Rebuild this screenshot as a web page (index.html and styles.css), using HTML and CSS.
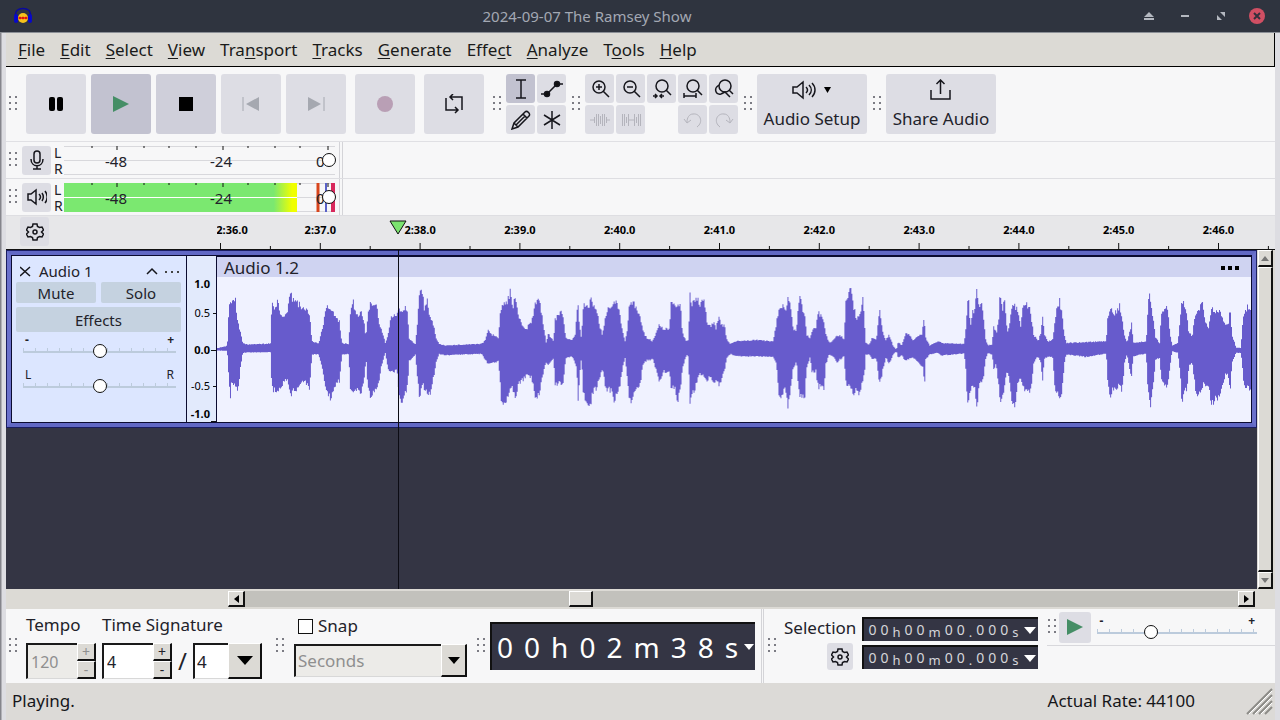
FILE: index.html
```html
<!DOCTYPE html>
<html lang="en">

<head>
  <meta charset="UTF-8">
  <meta name="viewport" content="width=device-width, initial-scale=1.0">
  <title>2024-09-07 The Ramsey Show</title>
  <link rel="stylesheet" href="styles.css">
</head>

<body>
  <header class="titlebar">
    <svg class="logo" width="20" height="18" viewBox="0 0 20 18">
      <path d="M3 11C1 3 6 1.500 10 1.500S19 3 17 11" fill="none" stroke="#0a0a9c" stroke-width="1.500" />
      <circle cx="10" cy="11" r="5" fill="#f6c21c" />
      <path d="M5 11l2-1.500 1.500 1 1.500-1 1.500 1 1.500-1 2 1.500-2 1.500-1.500-1-1.500 1-1.500-1-1.500 1z" fill="#e01010" />
      <rect x="1" y="7" width="4" height="9" rx="2" fill="#0808c8" />
      <rect x="15" y="7" width="4" height="9" rx="2" fill="#0808c8" />
    </svg>
    <h1>2024-09-07 The Ramsey Show</h1>
    <div class="win-buttons">
      <button aria-label="Shade"><svg width="10" height="10"><path d="M5 1l5 5H0zM0 7h10v2H0z" /></svg></button>
      <button aria-label="Minimize"><svg width="10" height="10"><path d="M1 4h8v2H1z" /></svg></button>
      <button aria-label="Restore"><svg width="10" height="10"><path d="M4 1h5v5zM1 4v5h5z" /></svg></button>
      <button class="close" aria-label="Close"><svg width="10" height="10"><path d="M2 2l6 6M8 2l-6 6" stroke="#33303c" stroke-width="2" /></svg></button>
    </div>
  </header>

  <div class="window">
    <nav class="menubar">
      <a href="#"><u>F</u>ile</a>
      <a href="#"><u>E</u>dit</a>
      <a href="#"><u>S</u>elect</a>
      <a href="#"><u>V</u>iew</a>
      <a href="#">Tra<u>n</u>sport</a>
      <a href="#"><u>T</u>racks</a>
      <a href="#"><u>G</u>enerate</a>
      <a href="#">Effe<u>c</u>t</a>
      <a href="#"><u>A</u>nalyze</a>
      <a href="#">T<u>o</u>ols</a>
      <a href="#"><u>H</u>elp</a>
    </nav>

    <div class="toolbar">
      <span class="grip"></span>
      <div class="transport">
        <button aria-label="Pause"><svg width="20" height="20"><rect x="3" y="3" width="6" height="14" rx="2" /><rect x="11" y="3" width="6" height="14" rx="2" /></svg></button>
        <button class="pressed" aria-label="Play"><svg width="20" height="20"><path d="M2 2l16 8-16 8z" fill="#458e66" /></svg></button>
        <button class="hot" aria-label="Stop"><svg width="20" height="20"><path d="M3 3h14v14H3z" /></svg></button>
        <button disabled aria-label="Skip to start"><svg width="20" height="20"><path d="M18 3v14L5 10z" fill="#a5a8b0" /><path d="M2 3v14" stroke="#a5a8b0" /></svg></button>
        <button disabled aria-label="Skip to end"><svg width="20" height="20"><path d="M2 3v14l13-7z" fill="#a5a8b0" /><path d="M18 3v14" stroke="#a5a8b0" /></svg></button>
        <button class="apart" disabled aria-label="Record"><svg width="20" height="20"><circle cx="10" cy="10" r="8" fill="#b99fb5" /></svg></button>
        <button class="apart" aria-label="Loop"><svg class="line" width="20" height="20"><path d="M5 16H2V4M6 3h12v13M9 0L6 3l3 3M4 16h10M11 13l3 3-3 3" /></svg></button>
      </div>
      <span class="grip"></span>
      <div class="grid tools">
        <button class="pressed" aria-label="Selection tool"><svg class="line" width="20" height="20"><path d="M5 1h10M5 19h10M10 1v18" /></svg></button>
        <button aria-label="Envelope tool"><svg class="line" width="22" height="20"><path d="M0 15h6L16 5h6" /><circle cx="6" cy="15" r="2.500" fill="#111" /><circle cx="16" cy="5" r="2.500" fill="#111" /></svg></button>
        <button aria-label="Draw tool"><svg class="line" width="20" height="20"><path d="M1 19l2-6L14 2c2-2 6 2 4 4L7 17zM3 13l4 4M12 4l4 4M5 15l9-9" /></svg></button>
        <button aria-label="Multi-tool"><svg class="line" width="20" height="20"><path d="M10 1v18M2 5l16 10M18 5L2 15" /></svg></button>
      </div>
      <span class="grip"></span>
      <div class="grid zoom">
        <button aria-label="Zoom in"><svg class="line" width="20" height="20"><circle cx="9" cy="8" r="6" /><path d="M13 12l6 6M6 8h6M9 5v6" /></svg></button>
        <button aria-label="Zoom out"><svg class="line" width="20" height="20"><circle cx="9" cy="8" r="6" /><path d="M13 12l6 6M6 8h6" /></svg></button>
        <button aria-label="Fit selection"><svg class="line" width="20" height="20"><circle cx="10" cy="7" r="6" /><path d="M14 11l5 5M1 17h4M8 17h4M3 15l2 2-2 2M10 15l-2 2 2 2" /></svg></button>
        <button aria-label="Fit project"><svg class="line" width="20" height="20"><circle cx="10" cy="7" r="6" /><path d="M14 11l5 5M1 17h12M1 14v5M13 14v5" /></svg></button>
        <button aria-label="Zoom toggle"><svg class="line" width="20" height="20"><circle cx="11" cy="7" r="6" /><path d="M15 11l4 4M5 6c-6 4-3 10 2 9M7 15l4-2 5 5" /></svg></button>
        <button disabled aria-label="Trim audio"><svg class="line" width="20" height="20"><path d="M0 10h4M16 10h4M4.500 7v6M6.500 4v12M8.500 4v12M10.500 6v8M12.500 4v12M14.500 4v12M16.500 7v6" /></svg></button>
        <button disabled aria-label="Silence audio"><svg class="line" width="20" height="20"><path d="M1.500 4v12M3.500 4v12M5.500 7v6M7.500 4v12M7 10h6M13.500 4v12M15.500 7v6M17.500 4v12M19.500 4v12" /></svg></button>
        <span></span>
        <button disabled aria-label="Undo"><svg class="line" width="20" height="20"><path d="M14 17c7-5 3-14-4-13-4 0-6 4-6 8M1 9l3 4 4-3" /></svg></button>
        <button disabled aria-label="Redo"><svg class="line" width="20" height="20"><path d="M6 17C-1 12 3 3 10 4c4 0 6 4 6 8M19 9l-3 4-4-3" /></svg></button>
      </div>
      <span class="grip"></span>
      <button class="big">
        <span class="big-icon"><svg class="line" width="24" height="20"><path d="M1 7v6h4l6 5V2L5 7zM14 7c2 2 2 4 0 6M17 5c3 3 3 7 0 10M20 3c4 4 4 10 0 14" /></svg><svg width="8" height="8"><path d="M0 1h7L3.500 7z" /></svg></span>
        Audio Setup
      </button>
      <span class="grip"></span>
      <button class="big">
        <span class="big-icon"><svg class="line" width="22" height="22"><path d="M1 11v9h19v-9M10.500 15V1M6.500 5l4-4 4 4" /></svg></span>
        Share Audio
      </button>
    </div>

    <div class="meter-row">
      <div class="meter-bar">
        <span class="grip"></span>
        <button class="small" aria-label="Record meter"><svg class="line" width="20" height="20"><rect x="7" y="1" width="6" height="12" rx="3" /><path d="M4 9c0 9 12 9 12 0M10 16v3M6 19h8" /></svg></button>
        <span class="channels">L<br>R</span>
        <div class="meter">
          <svg class="ticks" width="271" height="29"><path d="M28 0v2M80 0v2M105 0v2M132 0v2M184 0v2M211 0v2M236 0v2M53 0v4M159 0v4M264 0v4" /></svg>
          <span class="db db-48">-48</span><span class="db db-24">-24</span><span class="db db-0">0</span>
          <input type="range" value="100" aria-label="Recording volume">
        </div>
      </div>
    </div>
    <div class="meter-row">
      <div class="meter-bar">
        <span class="grip"></span>
        <button class="small" aria-label="Playback meter"><svg class="line" width="20" height="20"><path d="M1 7v6h3l5 4V3L4 7zM12 7c2 2 2 4 0 6M15 6c2 3 2 5 0 8M18 4c3 4 3 8 0 12" /></svg></button>
        <span class="channels">L<br>R</span>
        <div class="meter">
          <span class="level"></span>
          <svg class="ticks" width="271" height="29"><path d="M254 0v29" stroke="#d8451c" stroke-width="3" /><path d="M262 0v29" stroke="#5a62c8" stroke-width="2" /><path d="M269 0v29" stroke="#d8285c" stroke-width="4" /><path d="M28 0v2M80 0v2M105 0v2M132 0v2M184 0v2M211 0v2M236 0v2M53 0v4M159 0v4M264 0v4" /></svg>
          <span class="db db-48">-48</span><span class="db db-24">-24</span><span class="db db-0">0</span>
          <input type="range" value="100" aria-label="Playback volume">
        </div>
      </div>
    </div>

    <div class="timeline">
      <div class="timeline-head">
        <button class="small" aria-label="Timeline options"><svg class="line gear" width="18" height="18" viewBox="0 0 18 18"><path d="M7 1h4l.5 2.500 2 1L16 4l1.500 3-2 2 2 2L16 14l-2.500-.5-2 1L11 17H7l-.5-2.500-2-1L2 14 .5 11l2-2-2-2L2 4l2.500.5 2-1z" /><circle cx="9" cy="9" r="2" /></svg></button>
      </div>
      <svg class="ruler" height="33"></svg>
      <svg class="marker" width="18" height="16"><path d="M1 1h16L9 14z" fill="#7be36f" stroke="#111" /></svg>
    </div>

    <main class="workspace">
      <div class="tracks">
        <section class="track">
          <div class="panel">
            <div class="panel-top">
              <button aria-label="Delete track"><svg class="line" width="11" height="11"><path d="M0 1l10 9M10 1L0 10" /></svg></button>
              <span class="name">Audio 1</span>
              <button aria-label="Collapse"><svg class="line" width="12" height="8"><path d="M1 7l5-5 5 5" /></svg></button>
              <button aria-label="Track menu"><svg width="16" height="8"><path d="M1 4h2v2H1zM7 4h2v2H7zM13 4h2v2h-2z" fill="#444" /></svg></button>
            </div>
            <div class="panel-buttons">
              <button>Mute</button>
              <button>Solo</button>
              <button class="wide">Effects</button>
            </div>
            <label class="slider"><span>-</span><span>+</span><input type="range" value="50" aria-label="Gain"></label>
            <label class="slider pan"><span>L</span><span>R</span><input type="range" value="50" aria-label="Pan"></label>
          </div>
          <svg class="vruler" width="30" height="166">
            <text class="b" x="23" y="32">1.0</text>
            <text x="23" y="61">0.5</text>
            <text class="b" x="23" y="98">0.0</text>
            <text x="23" y="134">-0.5</text>
            <text class="b" x="23" y="162">-1.0</text>
            <path d="M26 57.500h4M24 94.500h6M26 130.500h4M24 165.500h6" />
          </svg>
          <div class="clip">
            <div class="clip-head"><span>Audio 1.2</span><button aria-label="Clip menu"><svg width="20" height="6"><path d="M1 1h4v4H1zM8 1h4v4H8zM15 1h4v4h-4z" /></svg></button></div>
            <svg class="wave" viewBox="0 66 3105 438" preserveAspectRatio="none"><path id="wave" /></svg>
          </div>
        </section>
        <div class="playhead"></div>
      </div>
      <div class="vscroll">
        <button aria-label="Scroll up"><svg width="8" height="5"><path d="M0 5l4-5 4 5z" /></svg></button>
        <div class="thumb"></div>
        <button aria-label="Scroll down"><svg width="8" height="5"><path d="M0 0l4 5 4-5z" /></svg></button>
      </div>
    </main>

    <div class="hscroll">
      <button aria-label="Scroll left"><svg width="5" height="8"><path d="M5 0L0 4l5 4z" /></svg></button>
      <div class="rail"><div class="thumb"></div></div>
      <button aria-label="Scroll right"><svg width="5" height="8"><path d="M0 0l5 4-5 4z" /></svg></button>
    </div>

    <div class="bottom">
      <span class="grip"></span>
      <div class="field tempo">
        <label for="tempo">Tempo</label>
        <div class="spin off">
          <input id="tempo" type="text" value="120" disabled>
          <div class="steps"><button disabled>+</button><button disabled>-</button></div>
        </div>
      </div>
      <div class="field signature">
        <label for="upper">Time Signature</label>
        <div class="sig-row">
          <div class="spin">
            <input id="upper" type="text" value="4">
            <div class="steps"><button>+</button><button>-</button></div>
          </div>
          <span class="slash">/</span>
          <div class="combo lower">
            <select aria-label="Lower time signature"><option>4</option></select>
            <span class="arrow"><svg width="16" height="9"><path d="M0 0h16L8 9z" /></svg></span>
          </div>
        </div>
      </div>
      <span class="grip"></span>
      <div class="field snap">
        <label><input type="checkbox">Snap</label>
        <div class="combo off">
          <select disabled aria-label="Snap to"><option>Seconds</option></select>
          <span class="arrow"><svg width="12" height="7"><path d="M0 0h12L6 7z" /></svg></span>
        </div>
      </div>
      <span class="grip"></span>
      <div class="clock">
        <span>0</span><span>0</span><span>h</span><span>0</span><span>2</span><span>m</span><span>3</span><span>8</span><span>s</span>
        <svg width="10" height="6"><path d="M0 0h10L5 6z" fill="#fff" /></svg>
      </div>
      <div class="selection">
        <span class="grip"></span>
        <div class="selection-head">
          <span>Selection</span>
          <button class="small" aria-label="Selection options"><svg class="line gear" width="18" height="18" viewBox="0 0 18 18"><path d="M7 1h4l.5 2.500 2 1L16 4l1.500 3-2 2 2 2L16 14l-2.500-.5-2 1L11 17H7l-.5-2.500-2-1L2 14 .5 11l2-2-2-2L2 4l2.500.5 2-1z" /><circle cx="9" cy="9" r="2" /></svg></button>
        </div>
        <div class="times">
          <div class="time"><span>0</span><span>0</span><i>h</i><span>0</span><span>0</span><i>m</i><span>0</span><span>0</span><i>.</i><span>0</span><span>0</span><span>0</span><i>s</i><svg width="12" height="7"><path d="M0 0h12L6 7z" fill="#fff" /></svg></div>
          <div class="time"><span>0</span><span>0</span><i>h</i><span>0</span><span>0</span><i>m</i><span>0</span><span>0</span><i>.</i><span>0</span><span>0</span><span>0</span><i>s</i><svg width="12" height="7"><path d="M0 0h12L6 7z" fill="#fff" /></svg></div>
        </div>
      </div>
      <div class="speed">
        <span class="grip"></span>
        <button class="small" aria-label="Play at speed"><svg width="18" height="18"><path d="M1 1l16 8-16 8z" fill="#458e66" /></svg></button>
        <label class="slider"><span>-</span><span>+</span><input type="range" value="32" aria-label="Playback speed"></label>
      </div>
    </div>

    <footer class="status">
      <span>Playing.</span>
      <span class="rate">Actual Rate: 44100</span>
      <svg width="28" height="28"><path d="M2 27L27 2M8 27L27 8M14 27l13-13M20 27l7-7" stroke="#8d8c88" stroke-width="2" /><path d="M4 27L27 4M10 27l17-17M16 27l11-11" stroke="#fff" /></svg>
    </footer>
  </div>

  <script src="wave.js"></script>
</body>

</html>
```
FILE: styles.css
```css
* {
  box-sizing: border-box;
  margin: 0;
  padding: 0;
}

body {
  display: flex;
  flex-direction: column;
  height: 100vh;
  overflow: hidden;
  background: linear-gradient(90deg, #85858c 1px, #dddde2 2px);
  color: #22222a;
  font: 17px/24px "Noto Sans", sans-serif;
}

button,
input,
select {
  font: inherit;
  color: inherit;
  border: 0;
  border-radius: 0;
}

button {
  display: flex;
  align-items: center;
  justify-content: center;
  background: none;
}

svg {
  display: block;
  flex: none;
}

.line {
  fill: none;
  stroke: #16161c;
  stroke-width: 1.5;
}

.titlebar {
  display: flex;
  align-items: center;
  flex: none;
  height: 33px;
  padding: 0 15px 0 13px;
  background: #2f343f;
  border-bottom: 1px solid #8b8f96;
}

.titlebar h1 {
  flex: 1;
  text-align: center;
  font-size: 15px;
  font-weight: normal;
  color: #a3a8b3;
}

.win-buttons {
  display: flex;
  gap: 20px;
  fill: #b4b8c0;
}

.win-buttons button {
  width: 16px;
  height: 16px;
}

.win-buttons .close {
  border-radius: 50%;
  background: #d04f63;
}

.window {
  display: flex;
  flex-direction: column;
  flex: 1;
  min-height: 0;
  margin: 0 5px 0 6px;
  background: #f7f7f8;
}

.menubar {
  display: flex;
  align-items: center;
  gap: 15px;
  flex: none;
  height: 34px;
  padding-left: 12px;
  background: #dcdad5;
  border: solid #000;
  border-width: 0 1px 1px 0;
}

.menubar a {
  color: #1a1a1a;
  text-decoration: none;
}

.menubar u {
  text-decoration-thickness: 1px;
  text-underline-offset: 2px;
}

/* dotted drag handle */
.grip {
  flex: none;
  width: 10px;
  height: 18px;
  background: radial-gradient(circle at 2px 2px, #7c7c84 1px, transparent 1px) 0 0 / 6px 6px;
}

.toolbar {
  display: flex;
  align-items: center;
  gap: 5px;
  flex: none;
  height: 75px;
  padding: 0 2px;
  border-bottom: 1px solid #e0e0e4;
}

.toolbar button,
.small {
  background: #dddde4;
  border-radius: 3px;
}

.toolbar .hot {
  background: #cfcfda;
}

.toolbar .pressed {
  background: #c2c2d0;
}

.toolbar button:disabled .line {
  stroke: #b4b4bc;
  stroke-width: 1;
}

.transport {
  display: flex;
  gap: 5px;
  margin: 0 3px;
}

.transport button {
  width: 60px;
  height: 60px;
}

.transport .apart {
  margin-left: 4px;
}

.grid {
  display: grid;
  grid-auto-rows: 29px;
  gap: 2px;
  margin-left: -1px;
}

.tools {
  grid-template-columns: repeat(2, 29px);
}

.zoom {
  grid-template-columns: repeat(5, 29px);
}

.toolbar .big {
  flex-direction: column;
  gap: 5px;
  width: 110px;
  height: 60px;
  margin-left: -1px;
}

.big-icon {
  display: flex;
  align-items: center;
  gap: 8px;
  height: 24px;
}

.small {
  flex: none;
  width: 29px;
  height: 29px;
}

.meter-row {
  display: flex;
  flex: none;
  height: 37px;
  border-bottom: 1px solid #dedee2;
}

.meter-bar {
  display: flex;
  align-items: center;
  padding: 0 4px 0 2px;
  border-right: 4px double #d4d4d8;
}

.meter-bar .small {
  margin: 0 3px 0 4px;
}

.channels {
  width: 10px;
  padding-top: 2px;
  font-size: 14px;
  line-height: 16px;
}

.meter {
  position: relative;
  width: 271px;
  height: 29px;
  border: solid #d8d8dc;
  border-width: 1px 0;
  background: linear-gradient(#d8d8dc, #d8d8dc) 0 50% / 100% 1px no-repeat;
}

.level {
  position: absolute;
  inset: -1px 38px -1px 0;
  background: linear-gradient(#fff, #fff) 0 50% / 100% 1px no-repeat,
    linear-gradient(90deg, #7be870 90%, #f0ff00 98%);
}

.ticks {
  position: absolute;
  top: -1px;
  left: 0;
  stroke: #111;
}

.db {
  position: absolute;
  top: 2px;
  font-size: 15px;
}

.db-48 {
  left: 41px;
}

.db-24 {
  left: 146px;
}

.db-0 {
  left: 252px;
}

input[type="range"] {
  appearance: none;
  background: none;
}

input[type="range"]::-webkit-slider-thumb {
  appearance: none;
  width: 14px;
  height: 14px;
  border: 1px solid #111;
  border-radius: 50%;
  background: #fff;
}

.meter input {
  position: absolute;
  top: 0;
  left: 0;
  width: 272px;
  height: 27px;
}

.timeline {
  position: relative;
  display: flex;
  flex: none;
  height: 34px;
  background: #e7e7e9;
  border-bottom: 1px solid #111;
}

.timeline-head {
  flex: none;
  width: 211px;
  padding: 1px 14px;
}

.ruler {
  flex: 1;
  min-width: 0;
}

.ruler text {
  font-size: 11px;
  font-weight: bold;
  text-anchor: middle;
}

.ruler path {
  stroke: #111;
}

.marker {
  position: absolute;
  left: 383px;
  top: 4px;
}

.workspace {
  display: flex;
  flex: 1;
  min-height: 0;
}

.tracks {
  position: relative;
  flex: 1;
  min-width: 0;
  background: #343544;
}

.track {
  display: flex;
  border: 5px solid #6b71cc;
  border-top-color: #6168c4;
  border-bottom-color: #6168c4;
  outline: 1px solid #1a1d60;
  outline-offset: -1px;
  height: 178px;
}

.panel {
  flex: none;
  width: 176px;
  padding: 4px 5px 4px 4px;
  border: 1px solid #0b0b30;
  background: #dce6ff;
  font-size: 15px;
  line-height: 20px;
}

.panel-top {
  display: flex;
  align-items: center;
  gap: 6px;
  height: 22px;
  padding: 0 1px 0 4px;
}

.name {
  flex: 1;
  padding-left: 2px;
}

.panel-buttons {
  display: grid;
  grid-template-columns: 1fr 1fr;
  gap: 4px 5px;
}

.panel-buttons button {
  height: 21px;
  background: #c5d2e0;
  border-radius: 2px;
}

.panel-buttons .wide {
  grid-column: span 2;
  height: 25px;
}

.slider {
  display: grid;
  grid-template-columns: 1fr auto;
  margin: 3px 5px 0 7px;
  font-size: 12px;
  font-weight: bold;
  line-height: 10px;
}

.slider.pan {
  margin-top: 12px;
  font-weight: normal;
}

.slider span {
  padding: 0 2px;
}

.slider input {
  grid-column: span 2;
  width: 100%;
  height: 14px;
  margin-top: -1px;
  background: linear-gradient(#bccbdc, #bccbdc) 0 7px / 100% 2px no-repeat,
    repeating-linear-gradient(90deg, #bccbdc 0 1px, transparent 1px 12px) 0 4px / 100% 4px no-repeat;
}

.vruler {
  border: solid #0b0b30;
  border-width: 1px 1px 1px 0;
  width: 30px;
  height: 168px;
  background: #e2eafc;
}

.vruler text {
  font-size: 11px;
  text-anchor: end;
}

.vruler .b {
  font-weight: bold;
}

.vruler path {
  stroke: #111;
}

.clip {
  display: flex;
  flex-direction: column;
  flex: 1;
  min-width: 0;
  border: solid #0b0b30;
  border-width: 2px 1px 1px 0;
  background: #f0f2ff;
}

.clip-head {
  display: flex;
  align-items: center;
  justify-content: space-between;
  flex: none;
  height: 20px;
  padding: 2px 11px 0 7px;
  background: #cfd3f1;
}

.wave {
  width: 100%;
  flex: 1;
  min-height: 0;
  fill: #675bcc;
}

.playhead {
  position: absolute;
  left: 392px;
  top: 0;
  bottom: 0;
  width: 1px;
  background: #0c0c14;
}

.vscroll {
  display: flex;
  flex-direction: column;
  flex: none;
  width: 18px;
  padding: 0 2px 0 1px;
  background: #dcdad5;
}

.vscroll button,
.hscroll button,
.thumb,
.steps button,
.arrow {
  background: #dcdad5;
  border: solid #111;
  border-color: #fff #111 #111 #fff;
  border-width: 1px 2px 2px 1px;
}

.vscroll button {
  flex: none;
  height: 17px;
  fill: #777;
}

.vscroll .thumb {
  flex: 1;
}

.hscroll {
  display: flex;
  flex: none;
  height: 20px;
  padding: 2px 20px 2px 222px;
  background: #dcdad5;
}

.hscroll button {
  flex: none;
  width: 17px;
}

.rail {
  flex: 1;
  background: #c2c1bc;
}

.rail .thumb {
  width: 24px;
  height: 16px;
  margin-left: 32.6%;
}

.bottom {
  display: flex;
  align-items: center;
  flex: none;
  height: 74px;
  padding-left: 2px;
}

.field {
  display: flex;
  flex-direction: column;
  gap: 6px;
  align-self: flex-start;
  padding-top: 4px;
}

.tempo {
  width: 69px;
  margin: 0 7px 0 8px;
}

.spin {
  display: flex;
  width: 70px;
  height: 36px;
  font-size: 16px;
}

.spin input,
.combo select {
  flex: 1;
  width: 20px;
  min-width: 0;
  padding-left: 3px;
  background: #fff;
  border: solid #1a1a1a;
  border-width: 2px 0 1px 2px;
  border-bottom-color: #d8d8d8;
}

.combo select {
  appearance: none;
  padding-left: 2px;
  opacity: 1;
}

.off input,
.off select {
  color: #8f8f8f;
  background: #ecebe8;
}

.steps {
  display: grid;
  flex: none;
  width: 19px;
  grid-template-rows: 1fr 1fr;
}

.steps button {
  min-height: 0;
  font-size: 14px;
  line-height: 14px;
}

.steps button:disabled {
  color: #8f8f8f;
}

.sig-row {
  display: flex;
  align-items: center;
}

.slash {
  width: 21px;
  text-align: center;
  font-size: 24px;
}

.combo {
  display: flex;
  height: 33px;
}

.arrow {
  display: flex;
  align-items: center;
  justify-content: center;
  flex: none;
  width: 26px;
}

.lower {
  width: 69px;
  height: 36px;
}

.lower .arrow {
  width: 34px;
}

.signature {
  margin-right: 13px;
}

.snap {
  width: 173px;
  margin: 0 9px;
  padding-top: 5px;
}

.snap label {
  display: flex;
  align-items: center;
  gap: 5px;
  padding-left: 4px;
}

.snap label input {
  appearance: none;
  width: 15px;
  height: 15px;
  background: #fff;
  border: 1px solid #111;
}

.clock {
  display: flex;
  align-items: center;
  gap: 11px;
  width: 265px;
  height: 48px;
  margin: 0 6px 0 4px;
  padding-left: 5px;
  background: #343544;
  border: solid #111;
  border-width: 2px 0 0 2px;
  color: #fff;
  font-size: 28px;
  overflow: hidden;
}

.clock svg {
  margin-left: -5px;
}

.selection {
  display: flex;
  align-items: flex-start;
  align-self: stretch;
  padding: 7px 0 0 3px;
  border-left: 3px double #d4d4d8;
}

.selection .grip {
  margin-top: 21px;
}

.selection-head {
  display: flex;
  flex-direction: column;
  align-items: flex-end;
  gap: 3px;
  margin: 0 6px 0 7px;
}

.selection-head .small {
  width: 26px;
  height: 27px;
  margin-right: 3px;
}

.times {
  display: grid;
  gap: 4px;
  margin-top: 1px;
}

.time {
  display: flex;
  align-items: center;
  gap: 4px;
  width: 176px;
  height: 24px;
  padding: 0 2px 0 4px;
  background: #343544;
  border: solid #111;
  border-width: 2px 0 0 2px;
  color: #d6d6da;
  font-size: 14px;
}

.time i {
  padding-top: 3px;
  font-size: 13px;
  font-style: normal;
}

.time svg {
  margin-left: auto;
}

.speed {
  display: flex;
  align-items: center;
  align-self: flex-start;
  flex: 1;
  height: 37px;
  margin-left: 9px;
  padding-right: 10px;
  border-bottom: 1px solid #d8d8dc;
}

.speed .small {
  width: 32px;
  height: 31px;
  margin-left: 2px;
}

.speed .slider {
  flex: 1;
  margin: 0 8px 0 6px;
}

.status {
  display: flex;
  align-items: center;
  flex: none;
  height: 37px;
  padding: 0 2px 2px 6px;
  background: #dcdad7;
  color: #16161a;
}

.rate {
  margin: 0 50px 0 auto;
}
```
FILE: wave.js
```js
// ruler: one label per second, half-second ticks between
var ruler = document.querySelector('.ruler')
var perSecond = 99.8
var marks = ''
for (var i = 0; 30 + i * perSecond < ruler.clientWidth; i++) {
  var x = 3.5 + i * perSecond
  var total = 156 + i
  var label = Math.floor(total / 60) + ':' + ('0' + total % 60).slice(-2) + '.0'
  marks += '<text x="' + Math.max(x, 15) + '" y="18">' + label + '</text>'
  marks += '<path d="M' + x + ' 27v6M' + (x + perSecond / 2) + ' 30v3"/>'
}
ruler.innerHTML = marks

// envelope of the clip: x, upper edge, lower edge
var blocks = [
  { start: -6, points: [[5,281,288],[35,274,289],[38,230,330],[40,137,380],[45,139,445],[48,138,385],[60,139,390],[65,185,405],[70,210,400],[75,235,340],[82,265,295],[95,270,294],[165,267,293],[168,180,370],[172,143,405],[180,165,410],[187,140,405],[195,180,395],[215,175,375],[221,133,390],[226,108,437],[231,150,410],[235,135,405],[250,150,400],[265,160,375],[282,175,405],[290,260,300],[310,268,300],[320,225,340],[333,160,405],[347,160,433],[360,180,395],[372,200,380],[380,265,300],[400,270,298],[405,180,400],[413,140,410],[425,180,405],[437,175,410],[445,195,390],[452,250,310],[458,165,400],[465,150,430],[483,145,400],[490,195,385],[497,220,340],[510,265,295],[520,235,350],[527,190,355],[545,180,345],[548,165,400],[562,180,450],[570,150,420],[577,180,390],[582,255,320],[600,268,300],[607,200,370],[613,112,433],[622,120,390],[627,160,400],[637,140,410],[643,190,420],[655,210,370],[663,250,320],[672,268,298],[690,273,302],[800,268,298],[810,255,315],[818,225,330],[830,240,325],[850,250,320],[855,180,385],[860,140,460],[870,155,440],[886,110,410],[893,160,400],[900,130,435],[910,190,390],[932,225,365],[950,200,370],[960,140,435],[973,140,415],[983,200,360],[993,265,325],[1000,235,330],[1015,262,310],[1020,195,390],[1034,170,385]] },
  { start: 1029, points: [[5,165,385],[10,200,390],[17,250,310],[35,255,305],[45,240,325],[50,170,345],[54,148,433],[58,210,370],[64,250,310],[70,148,425],[80,160,435],[90,145,452],[95,127,430],[100,155,410],[110,165,400],[118,210,375],[127,240,340],[135,190,395],[143,160,405],[155,165,410],[163,140,450],[172,150,405],[180,180,400],[187,230,340],[195,260,310],[203,220,380],[207,150,440],[218,138,435],[228,155,405],[240,180,395],[248,230,330],[260,250,318],[278,260,315],[290,230,350],[298,208,382],[310,225,350],[328,222,355],[333,150,400],[345,155,405],[352,145,450],[362,155,400],[367,235,340],[380,260,300],[386,255,310],[389,105,445],[395,150,410],[402,145,420],[411,127,380],[420,150,360],[433,137,365],[442,210,380],[452,215,360],[460,200,395],[468,220,375],[476,190,390],[485,210,375],[495,215,345],[500,255,310],[512,268,298],[525,260,305],[600,256,306],[640,262,308],[650,200,330],[657,170,420],[665,150,430],[675,170,400],[684,137,450],[693,155,400],[700,225,340],[710,230,320],[715,160,400],[721,118,425],[728,165,425],[735,180,420],[740,240,340],[750,250,310],[757,225,355],[768,220,350],[775,172,400],[785,185,395],[792,205,410],[798,240,330],[808,265,300],[820,258,305],[830,245,325],[840,240,315],[853,255,305],[857,140,380],[863,135,390],[869,105,385],[875,105,405],[880,145,425],[890,195,400],[900,185,420],[909,135,375],[914,200,360],[918,265,300],[928,270,300],[937,250,315],[950,255,310],[955,200,360],[961,165,390],[968,230,350],[978,255,310],[988,240,328],[1000,275,300],[1010,285,290],[1015,260,310],[1025,275,302],[1038,237,320]] },
  { start: 2049, points: [[22,235,315],[40,257,310],[55,245,320],[66,240,335],[71,195,345],[74,205,410],[78,250,315],[90,273,300],[115,260,295],[125,265,303],[192,268,297],[197,240,325],[201,180,405],[206,117,453],[211,215,405],[218,175,390],[226,160,410],[232,105,453],[238,160,395],[246,145,385],[252,195,365],[258,255,315],[265,273,295],[277,270,300],[282,215,340],[290,235,330],[297,195,395],[301,115,445],[308,165,425],[314,135,405],[320,205,355],[325,235,355],[332,185,395],[339,157,455],[348,157,450],[355,165,385],[362,220,370],[370,155,405],[380,150,405],[388,155,415],[396,195,385],[402,240,325],[415,260,305],[423,235,325],[429,185,375],[434,240,315],[445,260,305],[460,255,310],[464,205,385],[470,170,415],[480,138,430],[488,180,405],[494,240,325],[500,265,300],[560,263,307],[620,260,297],[624,195,375],[628,175,410],[634,153,425],[642,180,400],[652,170,410],[661,153,385],[667,195,420],[675,240,325],[682,265,300],[690,230,345],[696,207,365],[701,265,305],[740,260,297],[744,185,395],[748,102,425],[753,145,455],[760,185,405],[768,250,315],[780,265,310],[785,185,365],[795,165,395],[805,160,400],[811,235,335],[818,273,290],[835,265,295],[842,185,355],[846,145,445],[856,150,410],[862,185,410],[868,235,335],[878,245,320],[888,175,405],[898,165,425],[908,140,400],[915,195,385],[927,220,405],[938,160,450],[950,170,420],[957,165,435],[968,190,405],[980,215,355],[987,205,365],[992,160,420],[998,240,325],[1010,280,295],[1024,280,295],[1028,225,325],[1033,170,395],[1045,157,400],[1059,157,405]] }
]

var points = []
blocks.forEach(function (block) {
  block.points.forEach(function (p) {
    points.push([p[0] + block.start, p[1], p[2]])
  })
})

// small repeatable variation so neighbouring columns differ
function ripple(n, size) {
  var v = Math.sin(n * 127.1) * 43758.5
  return (v - Math.floor(v) - 0.5) * size * 0.16
}

var middle = 285
var d = ''
var k = 0
for (var px = 0; px < 3105; px += 3) {
  while (k < points.length - 2 && points[k + 1][0] < px) k++
  var a = points[k]
  var b = points[k + 1]
  var t = Math.max(0, Math.min(1, (px - a[0]) / (b[0] - a[0])))
  var upper = a[1] + (b[1] - a[1]) * t
  var lower = a[2] + (b[2] - a[2]) * t
  upper += ripple(px, middle - upper)
  lower += ripple(px + 1, lower - middle)
  d += 'M' + px + ' ' + upper + 'h3V' + lower + 'h-3z'
}
document.getElementById('wave').setAttribute('d', d)
```
